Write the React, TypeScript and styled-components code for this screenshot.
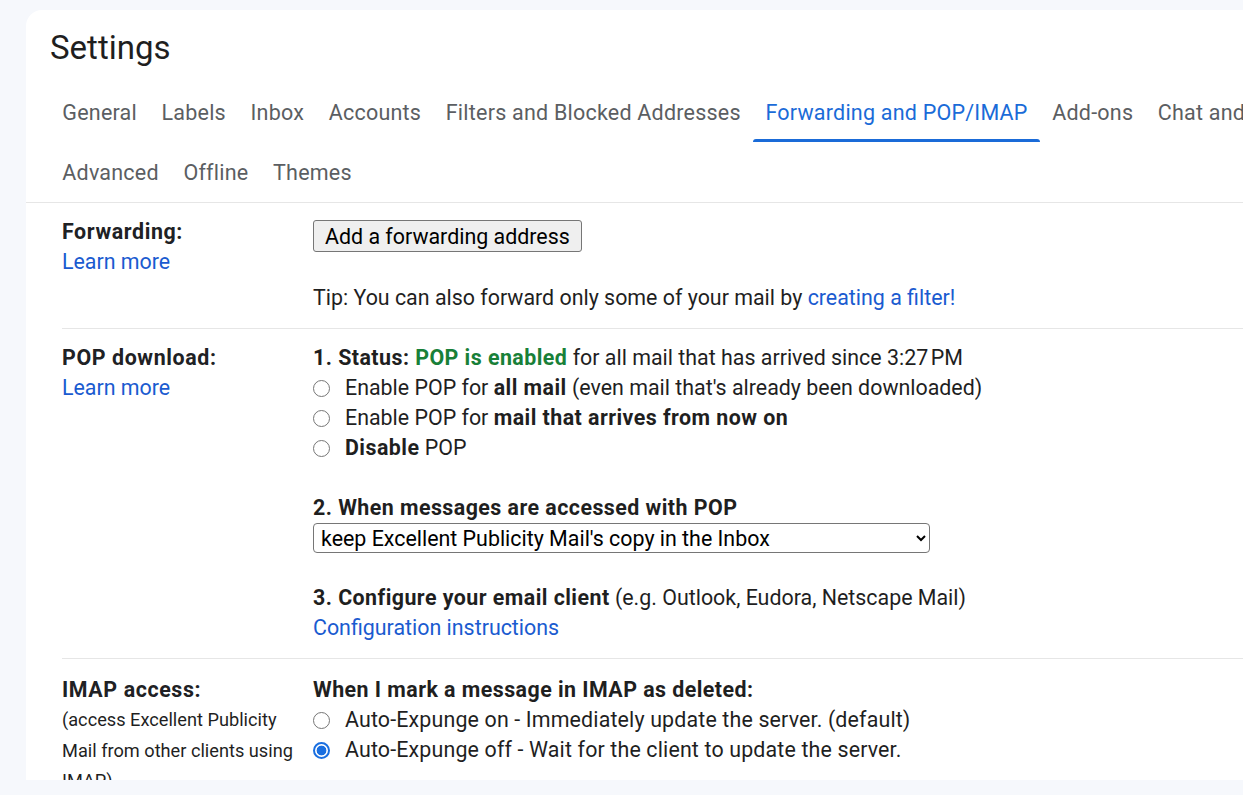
import React from "react";
import styled, { createGlobalStyle, css } from "styled-components";

const GlobalStyle = createGlobalStyle`
  html, body {
    margin: 0;
    padding: 0;
    background: #f6f8fc;
    overflow: hidden;
  }
  body {
    font-family: Roboto, "Liberation Sans", Arial, sans-serif;
    color: #1f1f1f;
  }
  * { box-sizing: border-box; }
  b { letter-spacing: 0.45px; }
`;

const Page = styled.div`
  height: 795px;
  padding: 10px 0 0 26px;
`;

const Card = styled.div`
  width: 1217px;
  height: 770px;
  background: #ffffff;
  border-radius: 16px 0 0 0;
  overflow: hidden;
`;

const Title = styled.h1`
  margin: 0;
  height: 72px;
  display: flex;
  align-items: center;
  padding: 2px 0 0 24px;
  font-family: Roboto, "Open Sans", sans-serif;
  font-weight: 400;
  font-size: 33px;
  color: #1f1f1f;
`;

const TabBar = styled.nav`
  padding-left: 24px;
  border-bottom: 1px solid #e6e6e6;
`;

const TabRow = styled.div`
  display: flex;
  height: 60px;
`;

const Tab = styled.div<{ $active?: boolean }>`
  position: relative;
  flex-shrink: 0;
  height: 60px;
  padding: 0 12.3px;
  display: flex;
  align-items: center;
  white-space: nowrap;
  font-family: Roboto, "Open Sans", sans-serif;
  font-size: 21.5px;
  letter-spacing: 0.22px;
  color: #5b5e62;
  ${(p) =>
    p.$active &&
    css`
      color: #1a6bd8;
      &::after {
        content: "";
        position: absolute;
        left: 0;
        right: 0;
        bottom: 0;
        height: 3px;
        border-radius: 3px 3px 0 0;
        background: #1a6bd8;
      }
    `}
`;

const Table = styled.div`
  padding-left: 36px;
`;

const Row = styled.section<{ $pt?: number; $last?: boolean }>`
  display: grid;
  grid-template-columns: 251px 1fr;
  padding: ${(p) => p.$pt ?? 14}px 0 15px;
  border-bottom: ${(p) => (p.$last ? "none" : "1px solid #e6e6e6")};
  font-size: 21.4px;
  line-height: 30px;
`;

const LabelCol = styled.div`
  display: flex;
  flex-direction: column;
`;

const Label = styled.div`
  font-weight: 700;
  letter-spacing: 0.6px;
  color: #202124;
  white-space: nowrap;
`;

const Note = styled.div`
  font-size: 18.2px;
  line-height: 30.5px;
  color: #1f1f1f;
  white-space: nowrap;
`;

const Link = styled.a`
  color: #1a5bd0;
  text-decoration: none;
  cursor: pointer;
`;

const Content = styled.div`
  display: flex;
  flex-direction: column;
  align-items: flex-start;
`;

const Line = styled.div<{ $gap?: number }>`
  margin-top: ${(p) => p.$gap ?? 0}px;
  white-space: nowrap;
`;

const Green = styled.b`
  color: #188038;
`;

const Button = styled.button`
  margin-top: 3px;
  height: 32px;
  padding: 0 11px;
  background: #efefef;
  border: 1px solid #767676;
  border-radius: 3px;
  font-family: Roboto, "Liberation Sans", Arial, sans-serif;
  font-size: 21.4px;
  color: #000;
`;

const Option = styled.label<{ $spacing?: number }>`
  display: flex;
  align-items: center;
  white-space: nowrap;
  letter-spacing: ${(p) => p.$spacing ?? 0}px;
`;

const Radio = styled.input.attrs({ type: "radio" })`
  appearance: none;
  flex-shrink: 0;
  margin: 0 15px 0 0;
  width: 17px;
  height: 17px;
  border-radius: 50%;
  border: 1px solid #767676;
  background: #fff;
  &:checked {
    border: 2px solid #1a6fe0;
    background: radial-gradient(circle, #1a6fe0 0 4.6px, #fff 5.2px);
  }
`;

const Select = styled.select`
  width: 617px;
  height: 30px;
  padding: 0 0 0 3px;
  border: 1px solid #767676;
  border-radius: 4px;
  background: #fff;
  font-family: Roboto, "Liberation Sans", Arial, sans-serif;
  font-size: 21.4px;
  color: #000;
`;

const topTabs = [
  "General",
  "Labels",
  "Inbox",
  "Accounts",
  "Filters and Blocked Addresses",
  "Forwarding and POP/IMAP",
  "Add-ons",
  "Chat and Meet",
];
const bottomTabs = ["Advanced", "Offline", "Themes"];

export default function App() {
  return (
    <>
      <GlobalStyle />
      <Page>
        <Card>
          <Title>Settings</Title>
          <TabBar>
            <TabRow>
              {topTabs.map((t) => (
                <Tab key={t} $active={t === "Forwarding and POP/IMAP"}>
                  {t}
                </Tab>
              ))}
            </TabRow>
            <TabRow>
              {bottomTabs.map((t) => (
                <Tab key={t}>{t}</Tab>
              ))}
            </TabRow>
          </TabBar>

          <Table>
            <Row>
              <LabelCol>
                <Label>Forwarding:</Label>
                <Link>Learn more</Link>
              </LabelCol>
              <Content>
                <Button>Add a forwarding address</Button>
                <Line $gap={31}>
                  Tip: You can also forward only some of your mail by{" "}
                  <Link>creating a filter!</Link>
                </Line>
              </Content>
            </Row>

            <Row>
              <LabelCol>
                <Label>POP download:</Label>
                <Link>Learn more</Link>
              </LabelCol>
              <Content>
                <Line>
                  <b>1. Status: </b>
                  <Green>POP is enabled</Green> for all mail that has arrived since
                  3:27{"\u202F"}PM
                </Line>
                <Option>
                  <Radio name="pop" />
                  <span>
                    Enable POP for <b>all mail</b> (even mail that's already been
                    downloaded)
                  </span>
                </Option>
                <Option>
                  <Radio name="pop" />
                  <span>
                    Enable POP for <b>mail that arrives from now on</b>
                  </span>
                </Option>
                <Option>
                  <Radio name="pop" />
                  <span>
                    <b>Disable</b> POP
                  </span>
                </Option>
                <Line $gap={30}>
                  <b>2. When messages are accessed with POP</b>
                </Line>
                <Select defaultValue="keep">
                  <option value="keep">keep Excellent Publicity Mail's copy in the Inbox</option>
                  <option value="read">mark Excellent Publicity Mail's copy as read</option>
                  <option value="archive">archive Excellent Publicity Mail's copy</option>
                  <option value="delete">delete Excellent Publicity Mail's copy</option>
                </Select>
                <Line $gap={30}>
                  <b>3. Configure your email client</b> (e.g. Outlook, Eudora,
                  Netscape Mail)
                </Line>
                <Link>Configuration instructions</Link>
              </Content>
            </Row>

            <Row $pt={16} $last>
              <LabelCol>
                <Label>IMAP access:</Label>
                <Note>(access Excellent Publicity</Note>
                <Note>Mail from other clients using</Note>
                <Note>IMAP)</Note>
              </LabelCol>
              <Content>
                <Line>
                  <b>When I mark a message in IMAP as deleted:</b>
                </Line>
                <Option $spacing={0.15}>
                  <Radio name="expunge" />
                  <span>Auto-Expunge on - Immediately update the server. (default)</span>
                </Option>
                <Option $spacing={0.15}>
                  <Radio name="expunge" defaultChecked />
                  <span>Auto-Expunge off - Wait for the client to update the server.</span>
                </Option>
              </Content>
            </Row>
          </Table>
        </Card>
      </Page>
    </>
  );
}
